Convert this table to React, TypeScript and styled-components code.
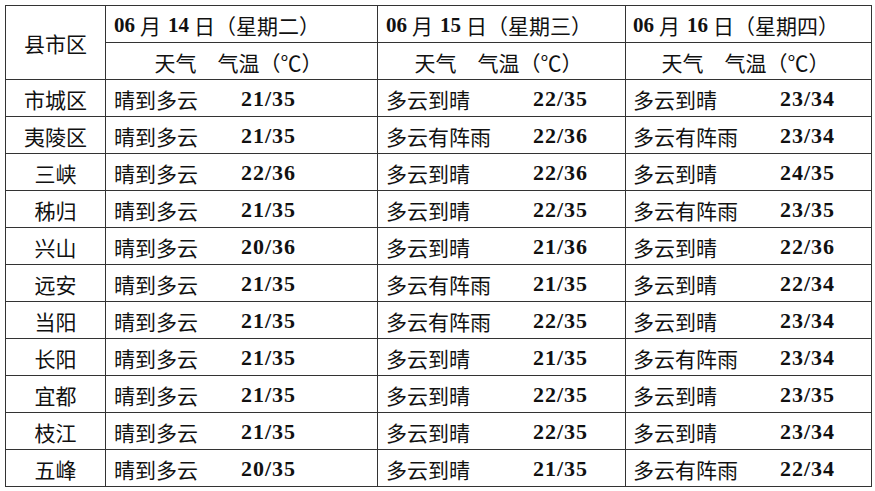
import React from "react";
import styled, { createGlobalStyle } from "styled-components";

const Global = createGlobalStyle`
  html, body { margin: 0; padding: 0; background: #fff; }
  body { font-family: "Noto Sans CJK SC", "Liberation Serif", serif; color: #111; }
`;

const Page = styled.div`
  padding: 5px 0 0 5px;
`;

const Grid = styled.div`
  display: grid;
  grid-template-columns: 100px 272px 248px 246px;
  grid-auto-rows: 37px;
  border-top: 1px solid #333;
  border-left: 1px solid #333;
  width: max-content;
`;

const Cell = styled.div<{ $rows?: number; $align?: "left" | "center"; $pad?: number }>`
  box-sizing: border-box;
  border-right: 1px solid #333;
  border-bottom: 1px solid #333;
  display: flex;
  align-items: center;
  justify-content: ${(p) => (p.$align === "left" ? "flex-start" : "center")};
  padding-left: ${(p) => p.$pad ?? 0}px;
  padding-top: 2px;
  grid-row: ${(p) => (p.$rows ? `span ${p.$rows}` : "auto")};
  font-size: 21px;
  line-height: 1;
  white-space: nowrap;
`;

const Num = styled.span`
  font-family: "Liberation Serif", serif;
  font-weight: 700;
  font-size: 22px;
  letter-spacing: 1px;
`;

const DateNum = styled.span<{ $gap: number }>`
  font-family: "Liberation Serif", serif;
  font-weight: 700;
  font-size: 21px;
  margin: 0 5px 0 ${(p) => p.$gap}px;
`;

const Weather = styled.span<{ $w: number }>`
  display: inline-block;
  width: ${(p) => p.$w}px;
`;

const HeadText = styled.span`
  padding-right: 6px;
`;

const dates = [
  { m: "06", d: "14", w: "二", pad: 8, ww: 127 },
  { m: "06", d: "15", w: "三", pad: 8, ww: 147 },
  { m: "06", d: "16", w: "四", pad: 7, ww: 147 },
];

type Row = [string, [string, string], [string, string], [string, string]];

const rows: Row[] = [
  ["市城区", ["晴到多云", "21/35"], ["多云到晴", "22/35"], ["多云到晴", "23/34"]],
  ["夷陵区", ["晴到多云", "21/35"], ["多云有阵雨", "22/36"], ["多云有阵雨", "23/34"]],
  ["三峡", ["晴到多云", "22/36"], ["多云到晴", "22/36"], ["多云到晴", "24/35"]],
  ["秭归", ["晴到多云", "21/35"], ["多云到晴", "22/35"], ["多云有阵雨", "23/35"]],
  ["兴山", ["晴到多云", "20/36"], ["多云到晴", "21/36"], ["多云到晴", "22/36"]],
  ["远安", ["晴到多云", "21/35"], ["多云有阵雨", "21/35"], ["多云到晴", "22/34"]],
  ["当阳", ["晴到多云", "21/35"], ["多云有阵雨", "22/35"], ["多云到晴", "23/34"]],
  ["长阳", ["晴到多云", "21/35"], ["多云到晴", "21/35"], ["多云有阵雨", "23/34"]],
  ["宜都", ["晴到多云", "21/35"], ["多云到晴", "22/35"], ["多云到晴", "23/35"]],
  ["枝江", ["晴到多云", "21/35"], ["多云到晴", "22/35"], ["多云到晴", "23/34"]],
  ["五峰", ["晴到多云", "20/35"], ["多云到晴", "21/35"], ["多云有阵雨", "22/34"]],
];

export default function App() {
  return (
    <Page>
      <Global />
      <Grid>
        <Cell $rows={2}>县市区</Cell>
        {dates.map((d) => (
          <Cell key={d.d} $align="left" $pad={d.pad}>
            <DateNum $gap={0}>{d.m}</DateNum>月<DateNum $gap={7}>{d.d}</DateNum>日（星期{d.w}）
          </Cell>
        ))}
        {dates.map((d) => (
          <Cell key={"h" + d.d}>
            <HeadText>天气　气温（℃）</HeadText>
          </Cell>
        ))}
        {rows.map((r) => (
          <React.Fragment key={r[0]}>
            <Cell>{r[0]}</Cell>
            {[r[1], r[2], r[3]].map((c, i) => (
              <Cell key={i} $align="left" $pad={dates[i].pad}>
                <Weather $w={dates[i].ww}>{c[0]}</Weather>
                <Num>{c[1]}</Num>
              </Cell>
            ))}
          </React.Fragment>
        ))}
      </Grid>
    </Page>
  );
}
